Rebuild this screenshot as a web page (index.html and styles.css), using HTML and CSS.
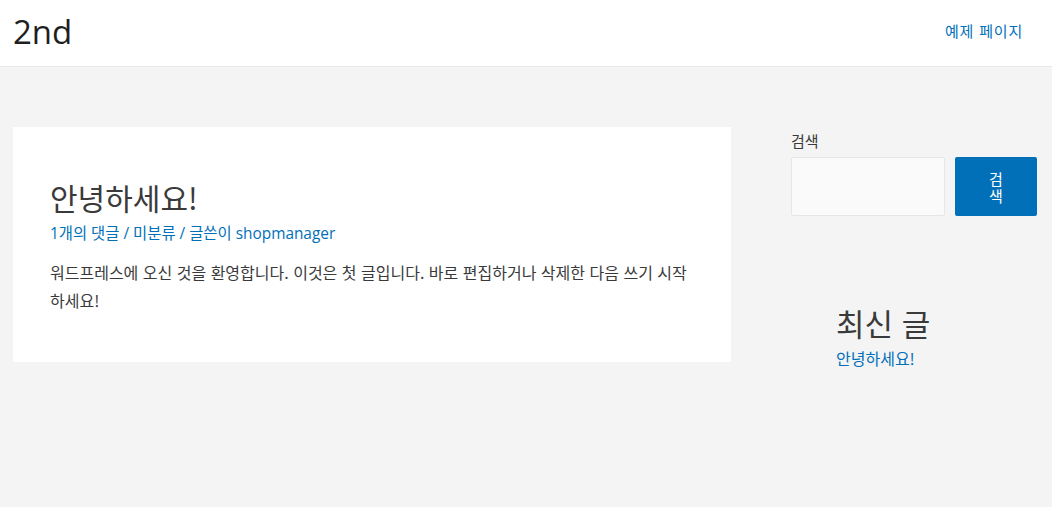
FILE: index.html
```html
<!DOCTYPE html>
<html lang="ko">
<head>
<meta charset="utf-8">
<title>2nd</title>
<link rel="stylesheet" href="styles.css">
</head>
<body>
<header class="site-header">
  <a class="site-title" href="#">2nd</a>
  <nav class="main-nav"><a href="#">예제 페이지</a></nav>
</header>
<div class="site-content">
  <main class="primary">
    <article class="post">
      <h2 class="entry-title">안녕하세요!</h2>
      <div class="entry-meta"><a href="#">1개의 댓글</a> / <a href="#">미분류</a> / 글쓴이 <a href="#">shopmanager</a></div>
      <p class="entry-content">워드프레스에 오신 것을 환영합니다. 이것은 첫 글입니다. 바로 편집하거나 삭제한 다음 쓰기 시작하세요!</p>
    </article>
  </main>
  <aside class="sidebar">
    <form class="search-widget">
      <label class="search-label">검색</label>
      <div class="search-row">
        <input class="search-input" type="text">
        <button class="search-button" type="button">검색</button>
      </div>
    </form>
    <section class="recent-widget">
      <h2 class="widget-title">최신 글</h2>
      <a class="recent-link" href="#">안녕하세요!</a>
    </section>
  </aside>
</div>
</body>
</html>
```
FILE: styles.css
```css
* { box-sizing: border-box; }
html, body { margin: 0; padding: 0; }
body {
  background: #f4f4f4;
  font-family: "Open Sans", "Noto Sans CJK KR", sans-serif;
  color: #3a3a3a;
  font-size: 15px;
}
a { color: #0170b9; text-decoration: none; }

.site-header {
  height: 67px;
  background: #fff;
  border-bottom: 1px solid #e8e8e8;
  display: flex;
  align-items: center;
  justify-content: space-between;
  padding: 0 29px 0 13px;
}
.site-title {
  font-family: "Open Sans", sans-serif;
  font-size: 33px;
  color: #1f1f1f;
  line-height: 1;
  margin-top: -4px;
}
.main-nav { margin-top: -6px; }
.main-nav a {
  font-family: "Noto Sans CJK KR", sans-serif;
  font-size: 15px;
  letter-spacing: 0.8px;
}

.site-content {
  display: flex;
  padding: 60px 15px 0 13px;
  gap: 60px;
}
.primary { width: 718px; flex: none; }
.post {
  background: #fff;
  padding: 46px 37px 38px 37px;
  height: 235px;
}
.entry-title {
  font-family: "Noto Sans CJK KR", sans-serif;
  font-weight: 400;
  font-size: 30px;
  line-height: 49px;
  margin: 0;
  color: #3a3a3a;
}
.entry-meta {
  font-family: "Open Sans", "Noto Sans CJK KR", sans-serif;
  font-size: 15.4px;
  line-height: 24px;
  margin-top: 0;
  color: #0170b9;
}
.entry-content {
  font-family: "Noto Sans CJK KR", sans-serif;
  font-size: 16px;
  line-height: 28px;
  margin: 12px 0 0;
  max-width: 640px;
  color: #3a3a3a;
}

.sidebar { flex: 1; padding-top: 4px; }
.search-label {
  display: block;
  font-family: "Noto Sans CJK KR", sans-serif;
  font-size: 15px;
  line-height: 20px;
  color: #3a3a3a;
  margin-bottom: 6px;
}
.search-row { display: flex; gap: 10px; }
.search-input {
  width: 154px;
  height: 59px;
  border: 1px solid #e6e6e6;
  border-radius: 2px;
  background: #fafafa;
  margin: 0;
}
.search-button {
  width: 82px;
  height: 59px;
  background: #0170b9;
  color: #fff;
  border: 0;
  border-radius: 2px;
  padding: 0 34px;
  font-family: "Noto Sans CJK KR", sans-serif;
  font-size: 15px;
  line-height: 17px;
  margin: 0;
}

.recent-widget {
  margin: 84px 0 0 45px;
}
.widget-title {
  font-family: "Noto Sans CJK KR", sans-serif;
  font-weight: 400;
  font-size: 31px;
  line-height: 46px;
  margin: 0;
  color: #3a3a3a;
}
.recent-link {
  display: block;
  font-family: "Noto Sans CJK KR", sans-serif;
  font-size: 16px;
  line-height: 24px;
  margin-top: 0;
}
```
